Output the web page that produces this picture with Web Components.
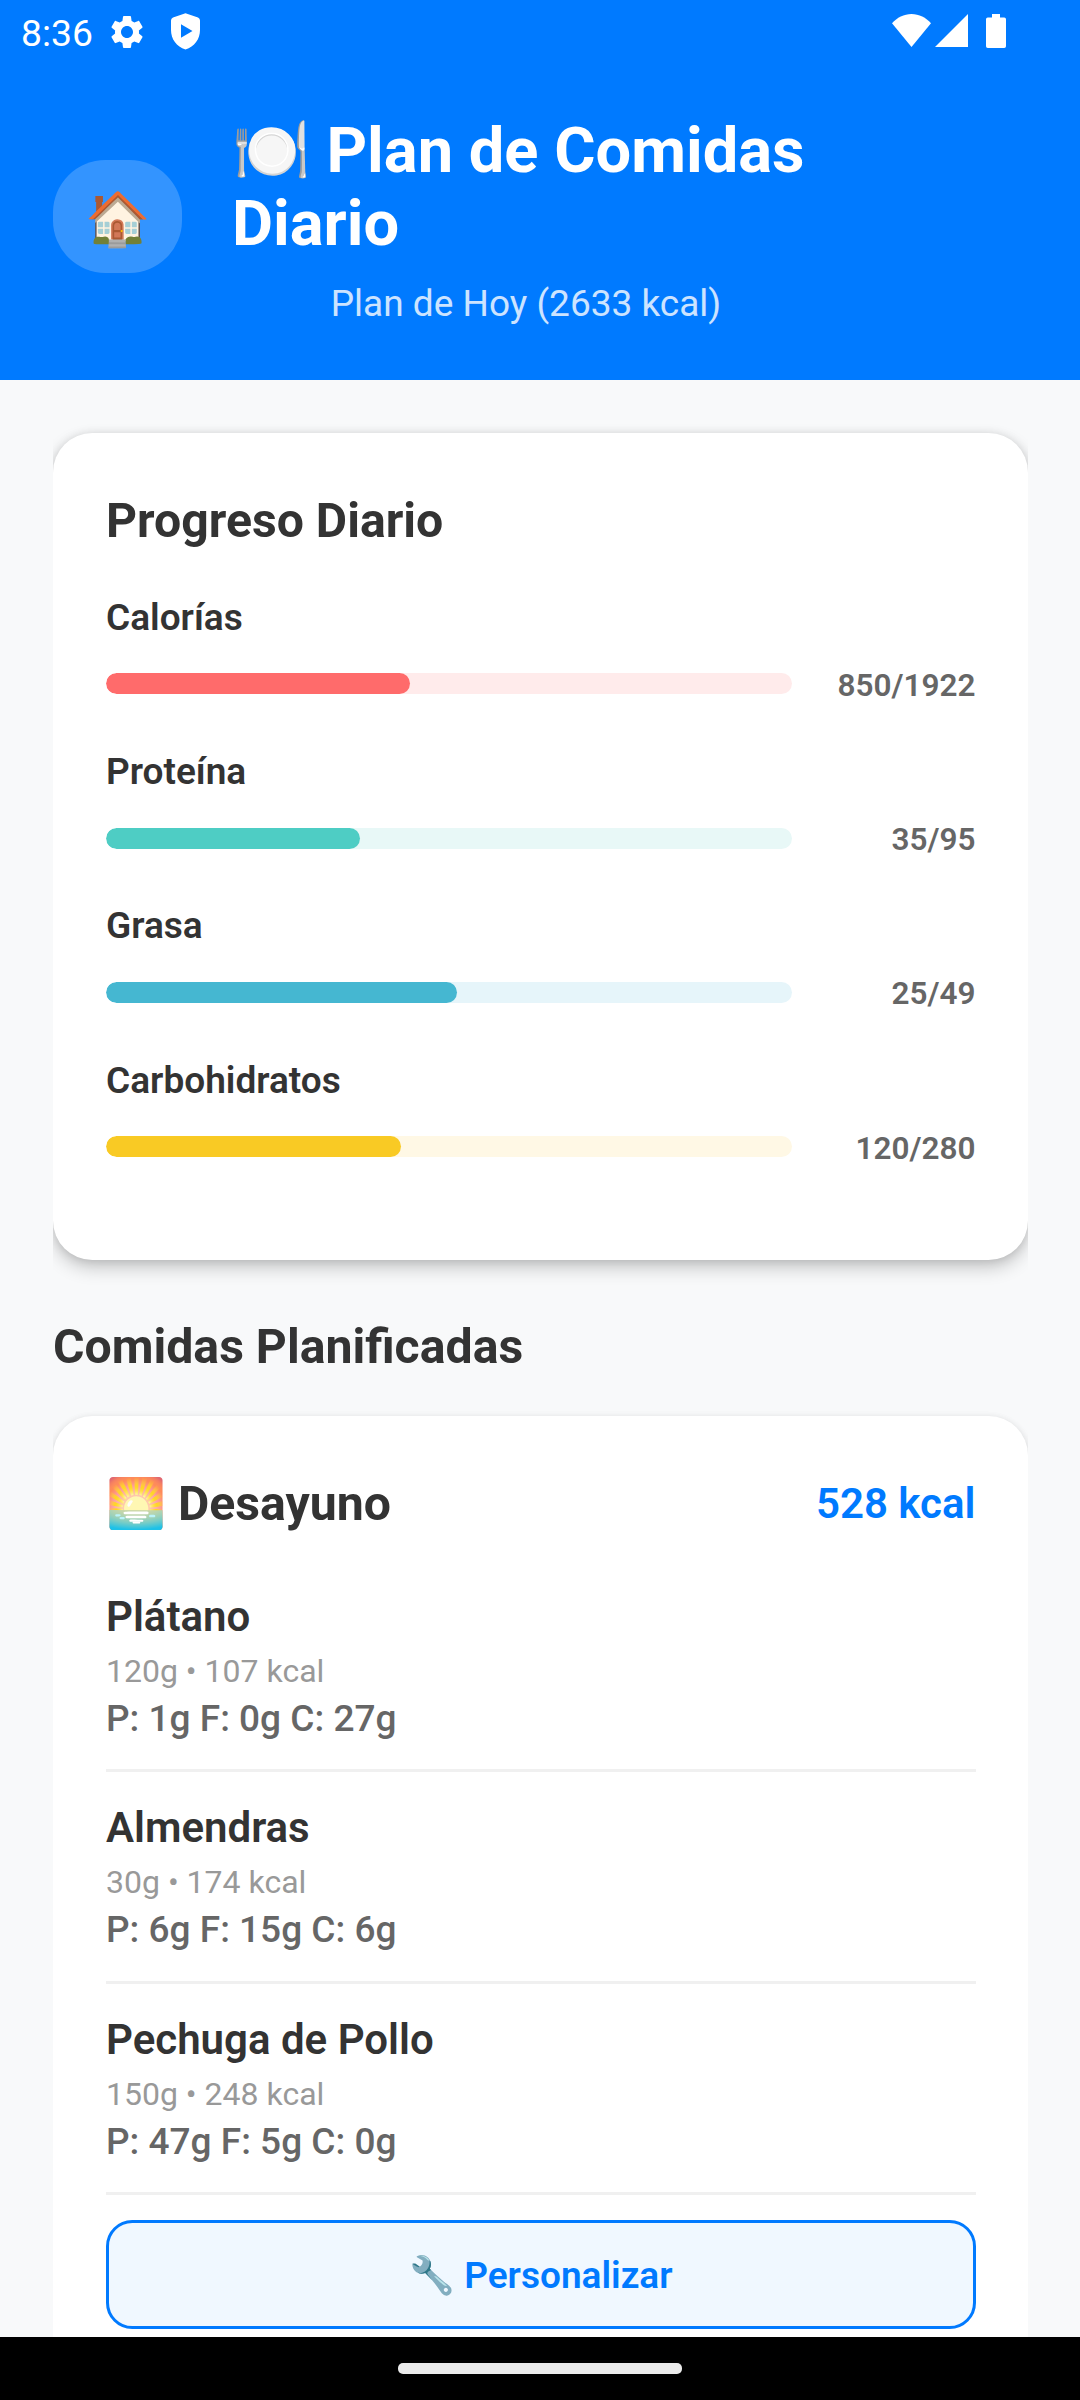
<!DOCTYPE html>
<html lang="es">
<head>
<meta charset="utf-8">
<title>Plan de Comidas Diario</title>
<style>
html,body{margin:0;padding:0}
body{width:1080px;height:2400px;overflow:hidden;font-family:Roboto,"Noto Color Emoji",sans-serif;color:#333;background:#f8f9fa}
</style>
</head>
<body>
<meal-app></meal-app>
<script>
const define = (name, html, setup) => {
  const t = document.createElement('template');
  t.innerHTML = html;
  customElements.define(name, class extends HTMLElement {
    constructor() {
      super();
      this.attachShadow({mode: 'open'}).append(t.content.cloneNode(true));
    }
    connectedCallback() { if (setup) setup(this, this.shadowRoot); }
  });
};

define('status-bar', `
<style>
:host{display:flex;height:63px;box-sizing:border-box;padding:0 74px 0 21px;align-items:flex-start;color:#fff;font-size:37.300px}
.time{line-height:43px;margin-top:12px;width:86px;white-space:nowrap}
svg{display:block;fill:#fff}
.gear{margin:11.5px 0 0 0}
.shield{margin:13px 0 0 24px}
.right{display:flex;margin-left:auto;padding-top:14px;align-items:flex-start}
</style>
<span class="time">8:36</span>
<svg class="gear" width="40" height="40" viewBox="0 0 24 24"><path d="M19.14 12.94c.04-.3.06-.61.06-.94 0-.32-.02-.64-.07-.94l2.03-1.58c.18-.14.23-.41.12-.61l-1.92-3.32c-.12-.22-.37-.29-.59-.22l-2.39.96c-.5-.38-1.03-.7-1.62-.94l-.36-2.54c-.04-.24-.24-.41-.48-.41h-3.84c-.24 0-.43.17-.47.41l-.36 2.54c-.59.24-1.13.57-1.62.94l-2.39-.96c-.22-.08-.47 0-.59.22L2.74 8.87c-.12.21-.08.47.12.61l2.03 1.58c-.05.3-.09.63-.09.94s.02.64.07.94l-2.03 1.58c-.18.14-.23.41-.12.61l1.92 3.32c.12.22.37.29.59.22l2.39-.96c.5.38 1.03.7 1.62.94l.36 2.54c.05.24.24.41.48.41h3.84c.24 0 .44-.17.47-.41l.36-2.54c.59-.24 1.13-.56 1.62-.94l2.39.96c.22.08.47 0 .59-.22l1.92-3.32c.12-.22.07-.47-.12-.61l-2.01-1.58zM12 15.6c-1.98 0-3.6-1.62-3.6-3.6s1.62-3.6 3.6-3.6 3.6 1.62 3.6 3.6-1.62 3.6-3.6 3.6z"/></svg>
<svg class="shield" width="29" height="37" viewBox="0 0 29 37"><path fill-rule="evenodd" d="M14.5.3 27 4.6Q29 5.400 29 7.600V17C29 26 23.500 33.800 14.500 36.600 5.500 33.800 0 26 0 17V7.600Q0 5.400 2 4.600ZM10 11.300V24.700L21.500 18Z"/></svg>
<div class="right">
<svg width="39" height="33" viewBox="0 0 39 33"><path d="M19.500 33 0 9.200C5 3.600 12 0 19.500 0S34 3.600 39 9.200Z"/></svg>
<svg width="33" height="33" viewBox="0 0 33 33" style="margin-left:3.500px"><path d="M33 0V33H0Z"/></svg>
<svg width="20" height="34" viewBox="0 0 20 34" style="margin-left:18.500px"><path d="M6 0h8v3.400h4.200q1.800 0 1.800 1.800v27q0 1.800-1.800 1.800H1.800Q0 34 0 32.200v-27Q0 3.400 1.800 3.400H6Z"/></svg>
</div>`);

define('plan-header', `
<style>
:host{display:flex;height:317px;box-sizing:border-box;padding:0 53px;color:#fff}
.home{flex:none;width:129px;height:113px;margin-top:97px;border-radius:52.500px;background:rgba(255,255,255,.2);display:flex;align-items:center;justify-content:center;font-size:52.500px;line-height:62px;padding:5px 0 0 2px;box-sizing:border-box}
.box{width:588px;margin:51px 0 0 50px;display:flex;flex-direction:column;align-items:center}
h1{margin:0;width:100%;font-size:63.200px;line-height:73px;font-weight:700}
p{margin:19px 0 0;font-size:37px;line-height:50px;opacity:.8;white-space:nowrap}
</style>
<div class="home">🏠</div>
<div class="box"><h1><slot name="title"></slot></h1><p><slot name="subtitle"></slot></p></div>`);

define('surface-card', `
<style>
:host{display:block;background:#fff;border-radius:39.400px;padding:52.500px 52.500px 52.500px 53px;box-sizing:border-box;clip-path:inset(-40px 0 -60px 0);box-shadow:var(--card-shadow)}
</style><slot></slot>`);

define('progress-row', `
<style>
:host{display:block;height:154.300px;box-sizing:border-box}
.label{font-size:37px;line-height:50px;font-weight:600}
.row{display:flex;align-items:center;gap:26.250px;height:44px;margin-top:19px}
.track{flex:1;height:21px;border-radius:10.500px;overflow:hidden;background:var(--track)}
.fill{height:100%;border-radius:10.500px;background:var(--fill)}
.value{width:157.500px;text-align:right;font-size:31.500px;line-height:40px;padding-top:4px;font-weight:600;color:#666}
</style>
<div class="label"></div>
<div class="row"><div class="track"><div class="fill"></div></div><div class="value"></div></div>`,
(el, r) => {
  const [now, goal] = [el.getAttribute('now'), el.getAttribute('goal')];
  r.querySelector('.label').textContent = el.getAttribute('label');
  r.querySelector('.value').textContent = now + '/' + goal;
  r.querySelector('.fill').style.width = 'calc(' + (100 * now / goal) + '% + 1.2px)';
});

define('food-item', `
<style>
:host{display:block;height:211.600px;box-sizing:border-box;padding-top:28.300px;border-bottom:3px solid #f0f0f0;white-space:nowrap}
.name{font-size:42px;line-height:56px;font-weight:600}
.info{font-size:32px;line-height:42px;color:#999;margin-top:5px}
.macros{font-size:37px;line-height:50px;color:#666;font-weight:500;margin-top:2px}
</style>
<div class="name"></div><div class="info"></div><div class="macros"></div>`,
(el, r) => {
  for (const k of ['name', 'info', 'macros']) r.querySelector('.' + k).textContent = el.getAttribute(k);
});

define('meal-header', `
<style>
:host{display:flex;justify-content:space-between;align-items:center;height:70px;white-space:nowrap}
.name{font-size:48.200px;line-height:70px;font-weight:700;padding-top:1px}
.kcal{font-size:42px;line-height:70px;font-weight:600;color:#007aff;padding-top:1px}
</style>
<span class="name"><slot></slot></span><span class="kcal"><slot name="kcal"></slot></span>`);

define('outline-button', `
<style>
:host{display:flex;align-items:center;justify-content:center;height:109px;box-sizing:border-box;padding-top:3px;border:3px solid #007aff;border-radius:26.250px;background:#f0f8ff;color:#007aff;font-size:37px;line-height:50px;font-weight:600;white-space:nowrap}
</style><span><slot></slot></span>`);

define('nav-bar', `
<style>
:host{display:flex;flex:none;height:63px;background:#000;justify-content:center;align-items:flex-start}
i{display:block;width:284px;height:11px;margin-top:26px;border-radius:5px;background:#ebebeb}
</style><i></i>`);

define('meal-app', `
<style>
:host{display:flex;flex-direction:column;width:1080px;height:2400px;overflow:hidden}
.top{flex:none;height:380px;background:#007aff}
main{flex:1;min-height:0;overflow:hidden;padding:53px 52px 0 53px;background:#f8f9fa}
h2{margin:0;font-size:48.200px;font-weight:700}
.progress{height:827px;--card-shadow:0 8px 18px rgba(0,0,0,.20),0 1px 10px rgba(0,0,0,.12)}
.progress h2{line-height:70px;margin-bottom:37.300px}
.section{line-height:60px;margin:56.500px 0 39.500px}
.meal{height:1100px;--card-shadow:0 4px 10px rgba(0,0,0,.13),0 0 6px rgba(0,0,0,.05)}
outline-button{margin-top:24.600px}
food-item:first-of-type{margin-top:22px}
</style>
<div class="top"><status-bar></status-bar>
<plan-header><span slot="title">🍽️ Plan de Comidas Diario</span><span slot="subtitle">Plan de Hoy (2633 kcal)</span></plan-header></div>
<main>
<surface-card class="progress"><h2>Progreso Diario</h2>
<progress-row label="Calorías" now="850" goal="1922" style="--fill:#ff6b6b;--track:#ffebeb"></progress-row>
<progress-row label="Proteína" now="35" goal="95" style="--fill:#4ecdc4;--track:#e8f8f7"></progress-row>
<progress-row label="Grasa" now="25" goal="49" style="--fill:#45b7d1;--track:#e6f5fa"></progress-row>
<progress-row label="Carbohidratos" now="120" goal="280" style="--fill:#f9ca24;--track:#fff8e5"></progress-row>
</surface-card>
<h2 class="section">Comidas Planificadas</h2>
<surface-card class="meal">
<meal-header>🌅 Desayuno<span slot="kcal">528 kcal</span></meal-header>
<food-item name="Plátano" info="120g • 107 kcal" macros="P: 1g F: 0g C: 27g"></food-item>
<food-item name="Almendras" info="30g • 174 kcal" macros="P: 6g F: 15g C: 6g"></food-item>
<food-item name="Pechuga de Pollo" info="150g • 248 kcal" macros="P: 47g F: 5g C: 0g"></food-item>
<outline-button>🔧 Personalizar</outline-button>
</surface-card>
</main>
<nav-bar></nav-bar>`);
</script>
</body>
</html>
